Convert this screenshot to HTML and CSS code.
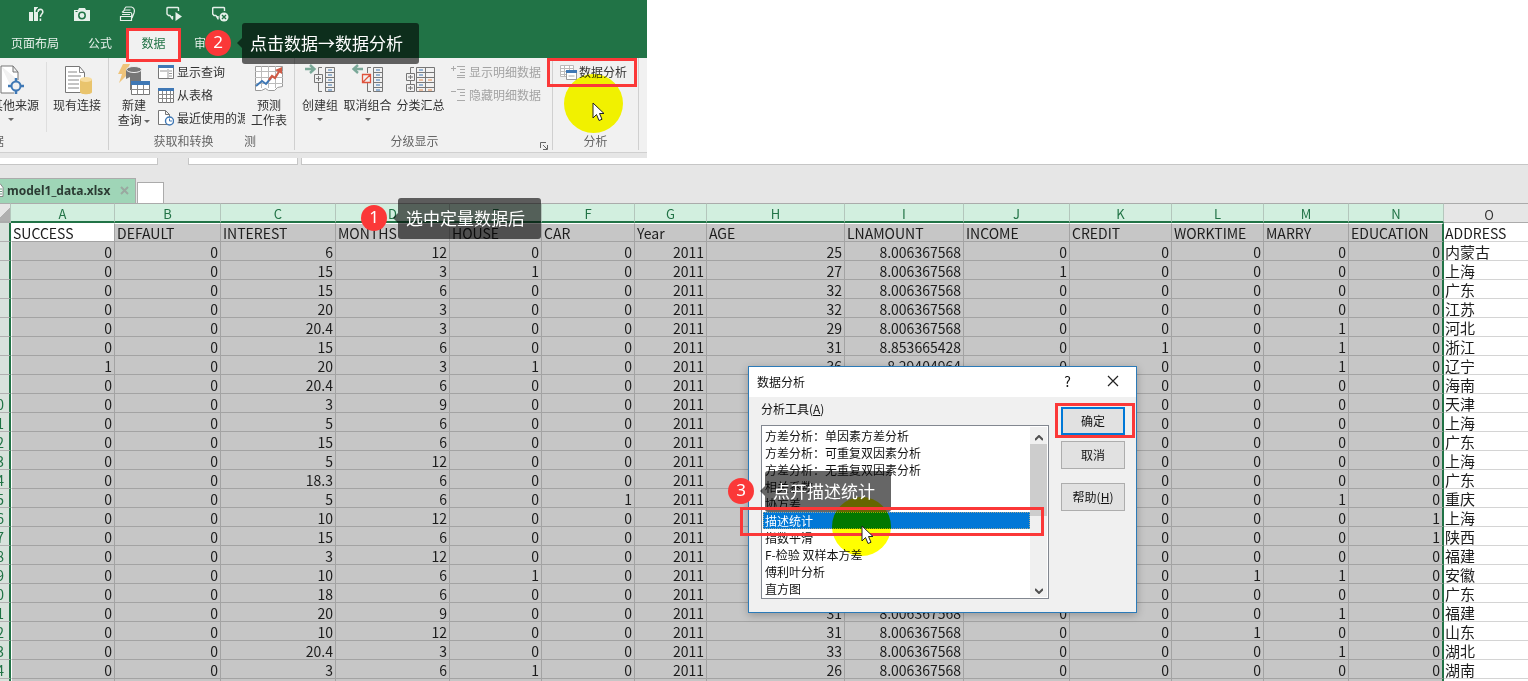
FILE: index.html
```html
<!DOCTYPE html>
<html lang="zh-CN">
<head>
<meta charset="utf-8">
<title>model1_data.xlsx</title>
<link rel="stylesheet" href="styles.css">
</head>
<body>
<main class="page">
  <section class="ribbon">
    <div class="quick">
      <button class="qbtn" aria-label="图表帮助"><svg width="16" height="16" viewBox="0 0 16 16"><path fill="#e6f0ea" d="M1 6h4v9H1zM6 1h4v14H6z"/><path d="M9.500 6c0-4 6-4 5.500 0 0 2.500-2.500 2-2.500 5" fill="none" stroke="#217346" stroke-width="4"/><path d="M10 6c0-3.500 5-3.500 4.800 0 0 2-2.400 2-2.400 5M12.400 12.500V15" fill="none" stroke="#e6f0ea" stroke-width="1.600"/></svg></button>
      <button class="qbtn" aria-label="照相机"><svg width="18" height="16" viewBox="0 0 18 16"><path fill="#e6f0ea" d="M1 4h4l1-2h6l1 2h4v11H1z"/><circle cx="9" cy="9.500" r="3.200" fill="none" stroke="#217346" stroke-width="1.500"/><path d="M2.500 5.500h2" stroke="#217346"/></svg></button>
      <button class="qbtn" aria-label="打印"><svg width="18" height="16" viewBox="0 0 18 16" fill="none" stroke="#e6f0ea" stroke-width="1.200"><path d="M1.500 10.500h11v4h-11zM3 8.500h8M3 6.500L5.500 4h6M5 3.500L7 1h5.500c3 1 3.500 3 2.500 6l-2 5M4 6.500h7.500c1.500 0 1.500 2 1 4"/></svg></button>
      <button class="qbtn" aria-label="播放批注"><svg width="17" height="16" viewBox="0 0 17 16"><path d="M6.500 10v3L4 9.500H2.500L1 8V2l1-.5h9.500l1 .5v3" fill="none" stroke="#e6f0ea" stroke-width="1.400" stroke-linejoin="round"/><path fill="#e6f0ea" d="M9.500 6l6.500 4.500L9.500 15z"/></svg></button>
      <button class="qbtn" aria-label="删除批注"><svg width="17" height="16" viewBox="0 0 17 16"><path d="M6 10v3L4 9.500H2L.7 8V2l1-.5h9.800l1 .5v3" fill="none" stroke="#e6f0ea" stroke-width="1.400" stroke-linejoin="round"/><circle cx="12" cy="11" r="4.500" fill="#e6f0ea"/><path d="M10 9l4 4m0-4l-4 4" stroke="#217346" stroke-width="1.400"/></svg></button>
    </div>
    <nav class="tabs">
      <button class="tab tab-wide">页面布局</button>
      <button class="tab">公式</button>
      <button class="tab tab-on">数据</button>
      <button class="tab">审阅</button>
    </nav>
    <div class="groups">
      <div class="group g-ext">
        <div class="group-body">
          <button class="big cut"><svg width="30" height="32" viewBox="0 0 30 32" fill="none"><path d="M2 2h12l5 6v8M2 2v27h13M14 2v6h5" stroke="#777" fill="#fff"/><circle cx="17" cy="22" r="4.500" stroke="#3f78b5" stroke-width="2" fill="#f1f1f1"/><path d="M17 14v4m0 8v4M9 22h4m8 0h4" stroke="#3f78b5" stroke-width="2.500"/></svg><span>其他来源</span><i class="caret"></i></button>
          <button class="big conn"><svg width="30" height="32" viewBox="0 0 30 32" fill="none"><path d="M3.500 2.500h14l5 6v20h-19z" fill="#fff" stroke="#777"/><path d="M17.500 2.500v6h5M6 8h9M6 12h13M6 16h11M6 20h11M6 24h11" stroke="#888"/><path d="M18 15v13c0 3 12 3 12 0V15" fill="#e9c46d"/><ellipse cx="24" cy="15.500" rx="6" ry="2.500" fill="#f7dda0"/></svg><span>现有连接</span></button>
        </div>
        <div class="group-label cut-label">据</div>
      </div>
      <div class="group g-get">
        <div class="group-body">
          <button class="big"><svg width="34" height="32" viewBox="0 0 34 32" fill="none"><path d="M6 0h7l-4 8h4L2 19l3-9H1z" fill="#efc47b"/><path d="M9 5h15v21H13V13l-4 2z" fill="#777"/><ellipse cx="17" cy="5.500" rx="7.500" ry="3" fill="#777" stroke="#f1f1f1"/><path fill="#fff" stroke="#777" d="M14.500 17.500h18v13h-18z"/><path fill="#3f78b5" d="M14 17h19v4H14z"/><path stroke="#888" d="M14 25.500h19M20.500 21v10M26.500 21v10"/></svg><span>新建<br>查询 <i class="caret inline"></i></span></button>
          <div class="stack">
            <button class="small"><svg width="16" height="16" viewBox="0 0 16 16"><path d="M.5 1.500h15v13H.5z" fill="#fff" stroke="#777"/><path d="M0 1h16v3H0z" fill="#3f78b5"/><path d="M2 7h7M11 7h3M11 9.500h3M11 12h3M10 5v9" stroke="#999"/></svg>显示查询</button>
            <button class="small"><svg width="16" height="16" viewBox="0 0 16 16"><path d="M.5 1.500h15v14H.5z" fill="#fff" stroke="#777"/><path d="M0 1h16v3H0z" fill="#3f78b5"/><path d="M0 7.500h16M0 11.500h16M4.500 4v12M8.500 4v12M12.500 4v12" stroke="#888"/></svg>从表格</button>
            <button class="small"><svg width="16" height="16" viewBox="0 0 16 16"><path d="M.5.500h7l4 4v10H.5zM7.500.500v4h4" fill="#fff" stroke="#777"/><circle cx="11.500" cy="11" r="4" fill="#fff" stroke="#3f78b5" stroke-width="1.400"/><path d="M11.500 8.500V11H14" fill="none" stroke="#3f78b5"/></svg>最近使用的源</button>
          </div>
        </div>
        <div class="group-label">获取和转换</div>
      </div>
      <div class="group g-fore">
        <div class="group-body">
          <button class="big"><svg width="30" height="32" viewBox="0 0 30 32" fill="none"><path d="M1.500 2.500h27v20l-5 1-3 3h-6l-3-2-4 2H1.500z" fill="#fff" stroke="#999"/><path d="M7.500 2v22M14.500 2v22M21.500 2v22M1 7.500h28M1 13.500h28M1 19.500h28" stroke="#bbb"/><path d="M2 22l6-5 4 3 5-6" stroke="#3f78b5" stroke-width="2"/><path d="M15 16l3-4 3 2 5-8" stroke="#cf5a45" stroke-width="2.200"/><path d="M21 6l7-3v7z" fill="#cf5a45"/></svg><span>预测<br>工作表</span></button>
        </div>
        <div class="group-label cut-label">测</div>
      </div>
      <div class="group g-outline">
        <div class="group-body">
          <button class="big"><svg width="32" height="32" viewBox="0 0 32 32" fill="none"><path d="M1 5h9M6 1l4.500 4L6 9" stroke="#7aa898" stroke-width="2.400"/><path d="M18 3.500h-3.500V10M14.500 18v9.500H18M10.500 10.500h8v8h-8zM14.500 12v5M12 14.500h5M21.500 3.500h9v24h-9zM21 8.500h10M21 13.500h10M21 18.500h10M21 23.500h10" stroke="#777"/><path d="M24 6h4m-4 5h4m-4 5h4m-4 5h4m-4 5h4" stroke="#3f78b5"/></svg><span>创建组</span><i class="caret"></i></button>
          <button class="big"><svg width="32" height="32" viewBox="0 0 32 32" fill="none"><path d="M11 5H2M6 1L1.500 5 6 9" stroke="#7aa898" stroke-width="2.400"/><path d="M19 3.500h-3.500V9M15.500 19v8.500H19M21.500 3.500h9v24h-9zM21 8.500h10M21 13.500h10M21 18.500h10M21 23.500h10" stroke="#777"/><path d="M10.500 10.500h8v8h-8zM11 18l7-7" stroke="#e0533d" stroke-width="1.300"/><path d="M24 6h4m-4 5h4m-4 5h4m-4 5h4m-4 5h4" stroke="#3f78b5"/></svg><span>取消组合</span><i class="caret"></i></button>
          <button class="big"><svg width="32" height="32" viewBox="0 0 32 32" fill="none"><path d="M9 3.500H5.500V9M5.500 17v3M1.500 9.500h8v7h-8zM1.500 20.500h8v7h-8zM5.500 11v4M3 13h5M5.500 22v4M3 24h5M11.500 3.500h18v24h-18zM11 8.500h19M11 13.500h19M11 18.500h19M11 23.500h19M20.500 3v25" stroke="#777"/><path d="M14 6h4m-4 5h4m-4 10h4" stroke="#3f78b5"/><path d="M14 16h4m5 0h4m-13 10h4m5 0h4" stroke="#e08a50"/></svg><span>分类汇总</span></button>
          <div class="stack two">
            <button class="small off" disabled><svg width="16" height="16" viewBox="0 0 16 16" stroke="#aaa"><path d="M0 4.500h5M2.500 2v5M6 2.500h8M9 5.500h5M9 8.500h5M6 11.500h8M6 13.500h8"/></svg>显示明细数据</button>
            <button class="small off" disabled><svg width="16" height="16" viewBox="0 0 16 16" stroke="#aaa"><path d="M0 4.500h5M6 2.500h8M9 5.500h5M9 8.500h5M6 13.500h8"/></svg>隐藏明细数据</button>
          </div>
        </div>
        <div class="group-label">分级显示</div>
        <button class="launcher" aria-label="分级显示设置"><svg width="8" height="8" viewBox="0 0 8 8" fill="none" stroke="#666"><path d="M.5 6V.5H6M3 3l4 4M7.500 3v4.500H3"/></svg></button>
      </div>
      <div class="group g-ana">
        <div class="group-body">
          <button class="small ana"><svg width="17" height="16" viewBox="0 0 17 16"><path d="M.5 1.500h13v11H.5zM0 4.500h14M0 7.500h14M0 10.500h14M4.500 1v12M9.500 1v12" fill="#fff" stroke="#bbb"/><path d="M6.500 6.500h10v9h-10z" fill="#fff" stroke="#999"/><path d="M6 6h11v3H6z" fill="#3f78b5"/><path d="M8.500 12h6" stroke="#aaa"/></svg>数据分析</button>
        </div>
        <div class="group-label">分析</div>
      </div>
    </div>
  </section>
  <div class="formula"><span class="namebox"></span><span class="fx"></span><span class="entry"></span></div>
  <div class="books">
    <button class="book"><svg width="7" height="16" viewBox="0 0 7 16" fill="none"><path d="M-6 1.500h6l3 4v9h-9z" fill="#fff" stroke="#888"/><path d="M0 7h2M0 9.500h2M0 12h2" stroke="#6a9c80"/></svg><b>model1_data.xlsx</b><svg class="x" width="9" height="9" viewBox="0 0 9 9"><path d="M1 1l7 7m0-7L1 8" stroke="#9aa8a0" stroke-width="2"/></svg></button>
    <button class="newbook" aria-label="新建"></button>
  </div>
  <table class="sheet">
    <colgroup><col class="c-n"><col class="c-a"><col class="c-b"><col class="c-c"><col class="c-d"><col class="c-e"><col class="c-f"><col class="c-g"><col class="c-h"><col class="c-i"><col class="c-j"><col class="c-k"><col class="c-l"><col class="c-m"><col class="c-nn"><col></colgroup>
    <thead><tr><th class="corner"></th><th>A</th><th>B</th><th>C</th><th>D</th><th>E</th><th>F</th><th>G</th><th>H</th><th>I</th><th>J</th><th>K</th><th>L</th><th>M</th><th>N</th><th class="plain">O</th></tr></thead>
    <tbody id="rows"></tbody>
  </table>

  <section class="dialog" role="dialog" aria-label="数据分析">
    <header class="dlg-title"><span>数据分析</span><button aria-label="帮助">?</button><button aria-label="关闭"><svg width="12" height="12" viewBox="0 0 12 12"><path d="M1 1l10 10M11 1L1 11" stroke="#222" stroke-width="1.200"/></svg></button></header>
    <div class="dlg-body">
      <div class="dlg-main">
        <label for="tools">分析工具(<u>A</u>)</label>
        <div class="listwrap">
          <select id="tools" size="10">
            <option>方差分析：单因素方差分析</option>
            <option>方差分析：可重复双因素分析</option>
            <option>方差分析：无重复双因素分析</option>
            <option>相关系数</option>
            <option>协方差</option>
            <option selected>描述统计</option>
            <option>指数平滑</option>
            <option>F-检验 双样本方差</option>
            <option>傅利叶分析</option>
            <option>直方图</option>
          </select>
          <div class="bar">
            <button aria-label="向上"><svg width="8" height="6" viewBox="0 0 8 6"><path d="M0 5l4-4 4 4" fill="none" stroke="#505050" stroke-width="2"/></svg></button>
            <span class="thumb"></span>
            <button aria-label="向下"><svg width="8" height="6" viewBox="0 0 8 6"><path d="M0 1l4 4 4-4" fill="none" stroke="#505050" stroke-width="2"/></svg></button>
          </div>
        </div>
      </div>
      <div class="dlg-actions">
        <button class="act primary">确定</button>
        <button class="act">取消</button>
        <button class="act help">帮助(<u>H</u>)</button>
      </div>
    </div>
  </section>

  <div class="spot spot-a"></div>
  <div class="spot spot-b"></div>
  <div class="frame frame-tab"></div>
  <div class="frame frame-ana"></div>
  <div class="frame frame-ok"></div>
  <div class="note note-1"><span class="num">1</span><span class="tip">选中定量数据后</span></div>
  <div class="note note-2"><span class="num">2</span><span class="tip">点击数据→数据分析</span></div>
  <div class="note note-3"><span class="num">3</span><span class="tip">点开描述统计</span></div>
  <div class="frame frame-item"></div>
  <svg class="cursor cur-a" viewBox="0 0 13 20"><path d="M1 1v15l3.500-3.500L7 18.500l3-1.200-2.500-5.800H12z" fill="#fff" stroke="#222"/></svg>
  <svg class="cursor cur-b" viewBox="0 0 13 20"><path d="M1 1v15l3.500-3.500L7 18.500l3-1.200-2.500-5.800H12z" fill="#fff" stroke="#222"/></svg>
</main>
<script src="script.js"></script>
</body>
</html>
```
FILE: styles.css
```css
* { box-sizing: border-box; }
body { margin: 0; background: #fff; font-family: "Noto Sans CJK SC", "Noto Sans", sans-serif; font-size: 12px; color: #333; }
button { font: inherit; color: inherit; border: 0; background: none; padding: 0; margin: 0; }
.page { position: relative; height: 100vh; overflow: hidden; }

/* ribbon */
.ribbon { width: 647px; max-width: 100%; overflow: hidden; background: #e6e6e6; padding-bottom: 5px; }
.quick { display: flex; gap: 28px; height: 29px; padding: 0 0 2px 27px; align-items: center; background: #217346; }
.qbtn { width: 18px; height: 16px; display: flex; justify-content: center; }
.tabs { display: flex; height: 29px; padding-left: 11px; background: #217346; color: #e6f0ea; }
.tab { width: 54px; line-height: 28px; padding-bottom: 1px; text-align: center; }
.tab-wide { width: 48px; margin-right: 13px; }
.tab:nth-child(2) { width: 56px; }
.tab-on { width: 51px; background: #f1f1f1; color: #217346; }
.groups { display: flex; height: 95px; background: #f1f1f1; border-bottom: 1px solid #d0d0d0; }
.group { position: relative; display: flex; flex-direction: column; padding-top: 4px; border-right: 1px solid #d0d0d0; flex: none; overflow: hidden; margin-bottom: 2px; }
.g-ext { width: 109px; }
.g-get { width: 136px; border: 0; }
.g-fore { width: 50px; }
.g-outline { width: 258px; }
.g-ana { width: 86px; }
.group-body { display: flex; height: 74px; }
.group-label { text-align: center; line-height: 18px; color: #666; }
.cut-label { text-align: left; margin-left: -1px; }
.g-ext .cut-label { margin-left: -8px; }
.g-get .group-label { padding-left: 13px; }
.g-outline .group-label { padding-right: 18px; }
.big { flex: none; display: flex; flex-direction: column; align-items: center; line-height: 15px; padding-top: 2px; white-space: nowrap; }
.big svg { margin-bottom: 1px; flex: none; }
.cut { width: 47px; border-right: 1px solid #dedede; }
.cut span { margin-left: -16px; }
.cut svg { margin-left: -18px; }
.cut .caret { margin-left: -24px; }
.conn { width: 60px; }
.caret { display: block; margin-top: 6px; border: 3px solid transparent; border-top-color: #666; border-bottom: 0; }
.caret.inline { display: inline-block; margin: 0 0 2px; }
.g-get .big { width: 49px; padding-left: 1px; }
.g-fore .big { width: 48px; }
.stack { display: flex; flex-direction: column; margin-top: -2px; }
.small { display: flex; align-items: center; gap: 3px; height: 23px; line-height: 23px; white-space: nowrap; flex: none; }
.small svg { flex: none; }
.g-outline .big { width: 50px; }
.g-outline .big + .big { width: 45px; }
.g-outline .big + .big + .big { width: 61px; }
.two .small { gap: 2px; }
.off { color: #a3a3a3; }
.launcher { position: absolute; right: 4px; bottom: 2px; width: 8px; height: 12px; }
.ana { margin: -2px 0 0 7px; gap: 2px; }

/* formula bar and workbook tabs */
.formula { display: flex; height: 7px; background: #e6e6e6; }
.formula span { background: #fff; border: 1px solid #c6c6c6; border-top: 0; }
.namebox { width: 159px; margin-left: -1px; margin-right: 30px; }
.fx { width: 110px; margin-right: 3px; }
.formula .entry { flex: 1; border-right: 0; }
.books { display: flex; align-items: flex-end; gap: 1px; height: 38px; background: #e6e6e6; }
.book { display: flex; align-items: center; width: 136px; height: 25px; padding-bottom: 2px; background: #9fd5b7; border: 1px solid #ababab; border-width: 1px 1px 0 0; color: #2b3b33; }
.book b { font: bold 12px "Noto Sans", sans-serif; white-space: nowrap; }
.book svg { flex: none; }
.book .x { margin-left: 10px; }
.newbook { width: 27px; height: 21px; background: #fff; border: 1px solid #ababab; border-bottom: 0; }

/* sheet */
.sheet { width: 100%; table-layout: fixed; border-collapse: separate; border-spacing: 0; font-size: 14px; color: #1c1c1c; }
.c-n { width: 11px; } .c-a { width: 104px; } .c-b { width: 106px; } .c-c { width: 115px; }
.c-d { width: 114px; } .c-e { width: 92px; } .c-f { width: 93px; } .c-g { width: 72px; }
.c-h { width: 138px; } .c-i { width: 119px; } .c-j { width: 106px; } .c-k { width: 102px; }
.c-l { width: 92px; } .c-m { width: 85px; } .c-nn { width: 95px; }
.sheet th, .sheet td { padding: 2px 2px 0; overflow: hidden; white-space: nowrap; }
.sheet thead th { height: 20px; line-height: 15px; font-weight: normal; font-size: 13px; color: #217346; background: #d2efdf; border-top: 1px solid #ababab; border-right: 1px solid #b4c6bc; border-bottom: 2px solid #217346; }
.sheet thead .plain { color: #333; background: #e6e6e6; border-right: 0; border-bottom: 1px solid #ababab; padding-left: 8px; }
.sheet thead .corner { background: linear-gradient(135deg, #e6e6e6 50%, #b0b0b0 50%); border-bottom-color: #ababab; }
.sheet td { height: 19px; line-height: 16px; text-align: right; background: #c6c6c6; border-right: 1px solid #a3a3a3; border-bottom: 1px solid #a3a3a3; }
.sheet tbody th { padding: 2px 0 0; background: #d8e2dc; border-right: 2px solid #217346; border-bottom: 1px solid #b0b0b0; color: #217346; font-weight: normal; line-height: 16px; }
.sheet tbody th span { display: flex; justify-content: flex-end; padding-right: 5px; }
.sheet tbody th .one { padding-right: 9px; }
.sheet td.name { text-align: left; }
.sheet td.active { background: #fff; }
.sheet td:nth-child(15) { border-right: 2px solid #217346; }
.sheet td:nth-child(2) { border-left: 1px solid #fff; padding-left: 1px; }
.sheet tr:first-child td { border-top: 1px solid #fff; padding-top: 1px; }
.sheet td:last-child { background: #fff; text-align: left; border-color: #d4d4d4; border-right: 0; font-size: 15px; padding-left: 1px; }
.sheet tr:first-child td:last-child { font-size: 14px; }

/* dialog */
.dialog { position: absolute; left: 748px; top: 366px; width: 389px; background: #f0f0f0; border: 1px solid #2b7ab8; color: #111; box-shadow: 0 2px 8px rgba(0, 0, 0, .25); }
.dlg-title { display: flex; align-items: center; height: 30px; padding: 0 1px 2px 8px; background: #fff; }
.dlg-title span { flex: 1; }
.dlg-title button { width: 45px; font-size: 14px; }
.dlg-body { display: flex; gap: 12px; padding: 3px 11px 13px 12px; }
.dlg-main { flex: 1; }
.dlg-main label { display: block; line-height: 18px; margin-bottom: 7px; }
.listwrap { display: flex; height: 174px; border: 1px solid #828790; background: #fff; padding: 1px; }
#tools { flex: 1; border: 0; border-radius: 0; outline: 0; padding: 0; margin: 0; font: inherit; background: #fff; color: #111; overflow: hidden; }
#tools option { min-height: 17px; height: 17px; line-height: 16px; padding: 0 2px; }
#tools option:checked { background: #0078d7 linear-gradient(#0078d7, #0078d7); color: #fff; outline: 1px dotted #a0a890; outline-offset: -1px; }
.bar { width: 17px; display: flex; flex-direction: column; background: #f0f0f0; }
.bar button { height: 17px; line-height: 14px; }
.thumb { height: 72px; margin-bottom: auto; background: #cdcdcd; }
.dlg-actions { display: flex; flex-direction: column; gap: 6px; width: 64px; padding-top: 7px; }
.act { height: 28px; padding-bottom: 2px; border: 1px solid #adadad; background: #e1e1e1; }
.primary { border: 2px solid #0078d7; }
.help { margin-top: 8px; }

/* annotations */
.spot { position: absolute; width: 59px; height: 59px; border-radius: 50%; background: #ff0; mix-blend-mode: multiply; }
.spot-a { left: 564px; top: 74px; }
.spot-b { left: 832px; top: 497px; }
.frame { position: absolute; border: 3px solid #fb3838; }
.frame-tab { left: 126px; top: 28px; width: 55px; height: 34px; }
.frame-ana { left: 547px; top: 58px; width: 90px; height: 29px; }
.frame-ok { left: 1055px; top: 403px; width: 80px; height: 35px; }
.frame-item { left: 740px; top: 507px; width: 304px; height: 29px; }
.note { position: absolute; display: flex; align-items: center; gap: 11px; color: #fff; }
.num { width: 26px; height: 26px; margin-bottom: 1px; border-radius: 50%; background: #fb3838; font: 17px/24px "Noto Sans", sans-serif; text-align: center; }
.tip { position: relative; height: 41px; line-height: 39px; font-size: 17px; padding: 0 16px 0 8px; border-radius: 3px; background: rgba(0, 0, 0, .6); white-space: nowrap; }
.tip::before { content: ""; position: absolute; left: -5px; top: 15px; border: 5px solid transparent; border-left: 0; border-right-color: rgba(0, 0, 0, .6); }
.note-1 { left: 361px; top: 198px; }
.note-2 { left: 205px; top: 23px; }
.note-3 { left: 728px; top: 471px; }
.cursor { position: absolute; width: 13px; height: 20px; }
.cur-a { left: 592px; top: 102px; }
.cur-b { left: 861px; top: 525px; }
```
FILE: script.js
```js
const names = ["SUCCESS", "DEFAULT", "INTEREST", "MONTHS", "HOUSE", "CAR", "Year", "AGE", "LNAMOUNT", "INCOME", "CREDIT", "WORKTIME", "MARRY", "EDUCATION", "ADDRESS"];
const L = "8.006367568";
const data = [
  [0, 0, 6, 12, 0, 0, 2011, 25, L, 0, 0, 0, 0, 0, "内蒙古"],
  [0, 0, 15, 3, 1, 0, 2011, 27, L, 1, 0, 0, 0, 0, "上海"],
  [0, 0, 15, 6, 0, 0, 2011, 32, L, 0, 0, 0, 0, 0, "广东"],
  [0, 0, 20, 3, 0, 0, 2011, 32, L, 0, 0, 0, 0, 0, "江苏"],
  [0, 0, 20.4, 3, 0, 0, 2011, 29, L, 0, 0, 0, 1, 0, "河北"],
  [0, 0, 15, 6, 0, 0, 2011, 31, "8.853665428", 0, 1, 0, 1, 0, "浙江"],
  [1, 0, 20, 3, 1, 0, 2011, 36, "8.29404964", 0, 0, 0, 1, 0, "辽宁"],
  [0, 0, 20.4, 6, 0, 0, 2011, "", "", 0, 0, 0, 0, 0, "海南"],
  [0, 0, 3, 9, 0, 0, 2011, "", "", 0, 0, 0, 0, 0, "天津"],
  [0, 0, 5, 6, 0, 0, 2011, "", "", 0, 0, 0, 0, 0, "上海"],
  [0, 0, 15, 6, 0, 0, 2011, "", "", 0, 0, 0, 0, 0, "广东"],
  [0, 0, 5, 12, 0, 0, 2011, "", "", 0, 0, 0, 0, 0, "上海"],
  [0, 0, 18.3, 6, 0, 0, 2011, "", "", 0, 0, 0, 0, 0, "广东"],
  [0, 0, 5, 6, 0, 1, 2011, "", "", 0, 0, 0, 1, 0, "重庆"],
  [0, 0, 10, 12, 0, 0, 2011, "", "", 0, 0, 0, 0, 1, "上海"],
  [0, 0, 15, 6, 0, 0, 2011, "", "", 0, 0, 0, 0, 1, "陕西"],
  [0, 0, 3, 12, 0, 0, 2011, "", "", 0, 0, 0, 0, 0, "福建"],
  [0, 0, 10, 6, 1, 0, 2011, "", "", 0, 0, 1, 1, 0, "安徽"],
  [0, 0, 18, 6, 0, 0, 2011, "", "", 0, 0, 0, 0, 0, "广东"],
  [0, 0, 20, 9, 0, 0, 2011, 31, L, 0, 0, 0, 1, 0, "福建"],
  [0, 0, 10, 12, 0, 0, 2011, 31, L, 0, 0, 1, 0, 0, "山东"],
  [0, 0, 20.4, 3, 0, 0, 2011, 33, L, 0, 0, 0, 1, 0, "湖北"],
  [0, 0, 3, 6, 1, 0, 2011, 26, L, 0, 0, 0, 0, 0, "湖南"],
  ["", "", "", "", "", "", "", "", "", "", "", "", "", "", ""]
];
const body = document.getElementById("rows");
[names, ...data].forEach((row, r) => {
  const tr = body.insertRow();
  const th = document.createElement("th");
  const num = document.createElement("span");
  num.textContent = r + 1;
  if (r < 9) num.className = "one";
  th.append(num);
  tr.append(th);
  row.forEach((v, c) => {
    const td = tr.insertCell();
    td.textContent = v;
    if (r === 0) td.className = c === 0 ? "name active" : "name";
  });
});
```
